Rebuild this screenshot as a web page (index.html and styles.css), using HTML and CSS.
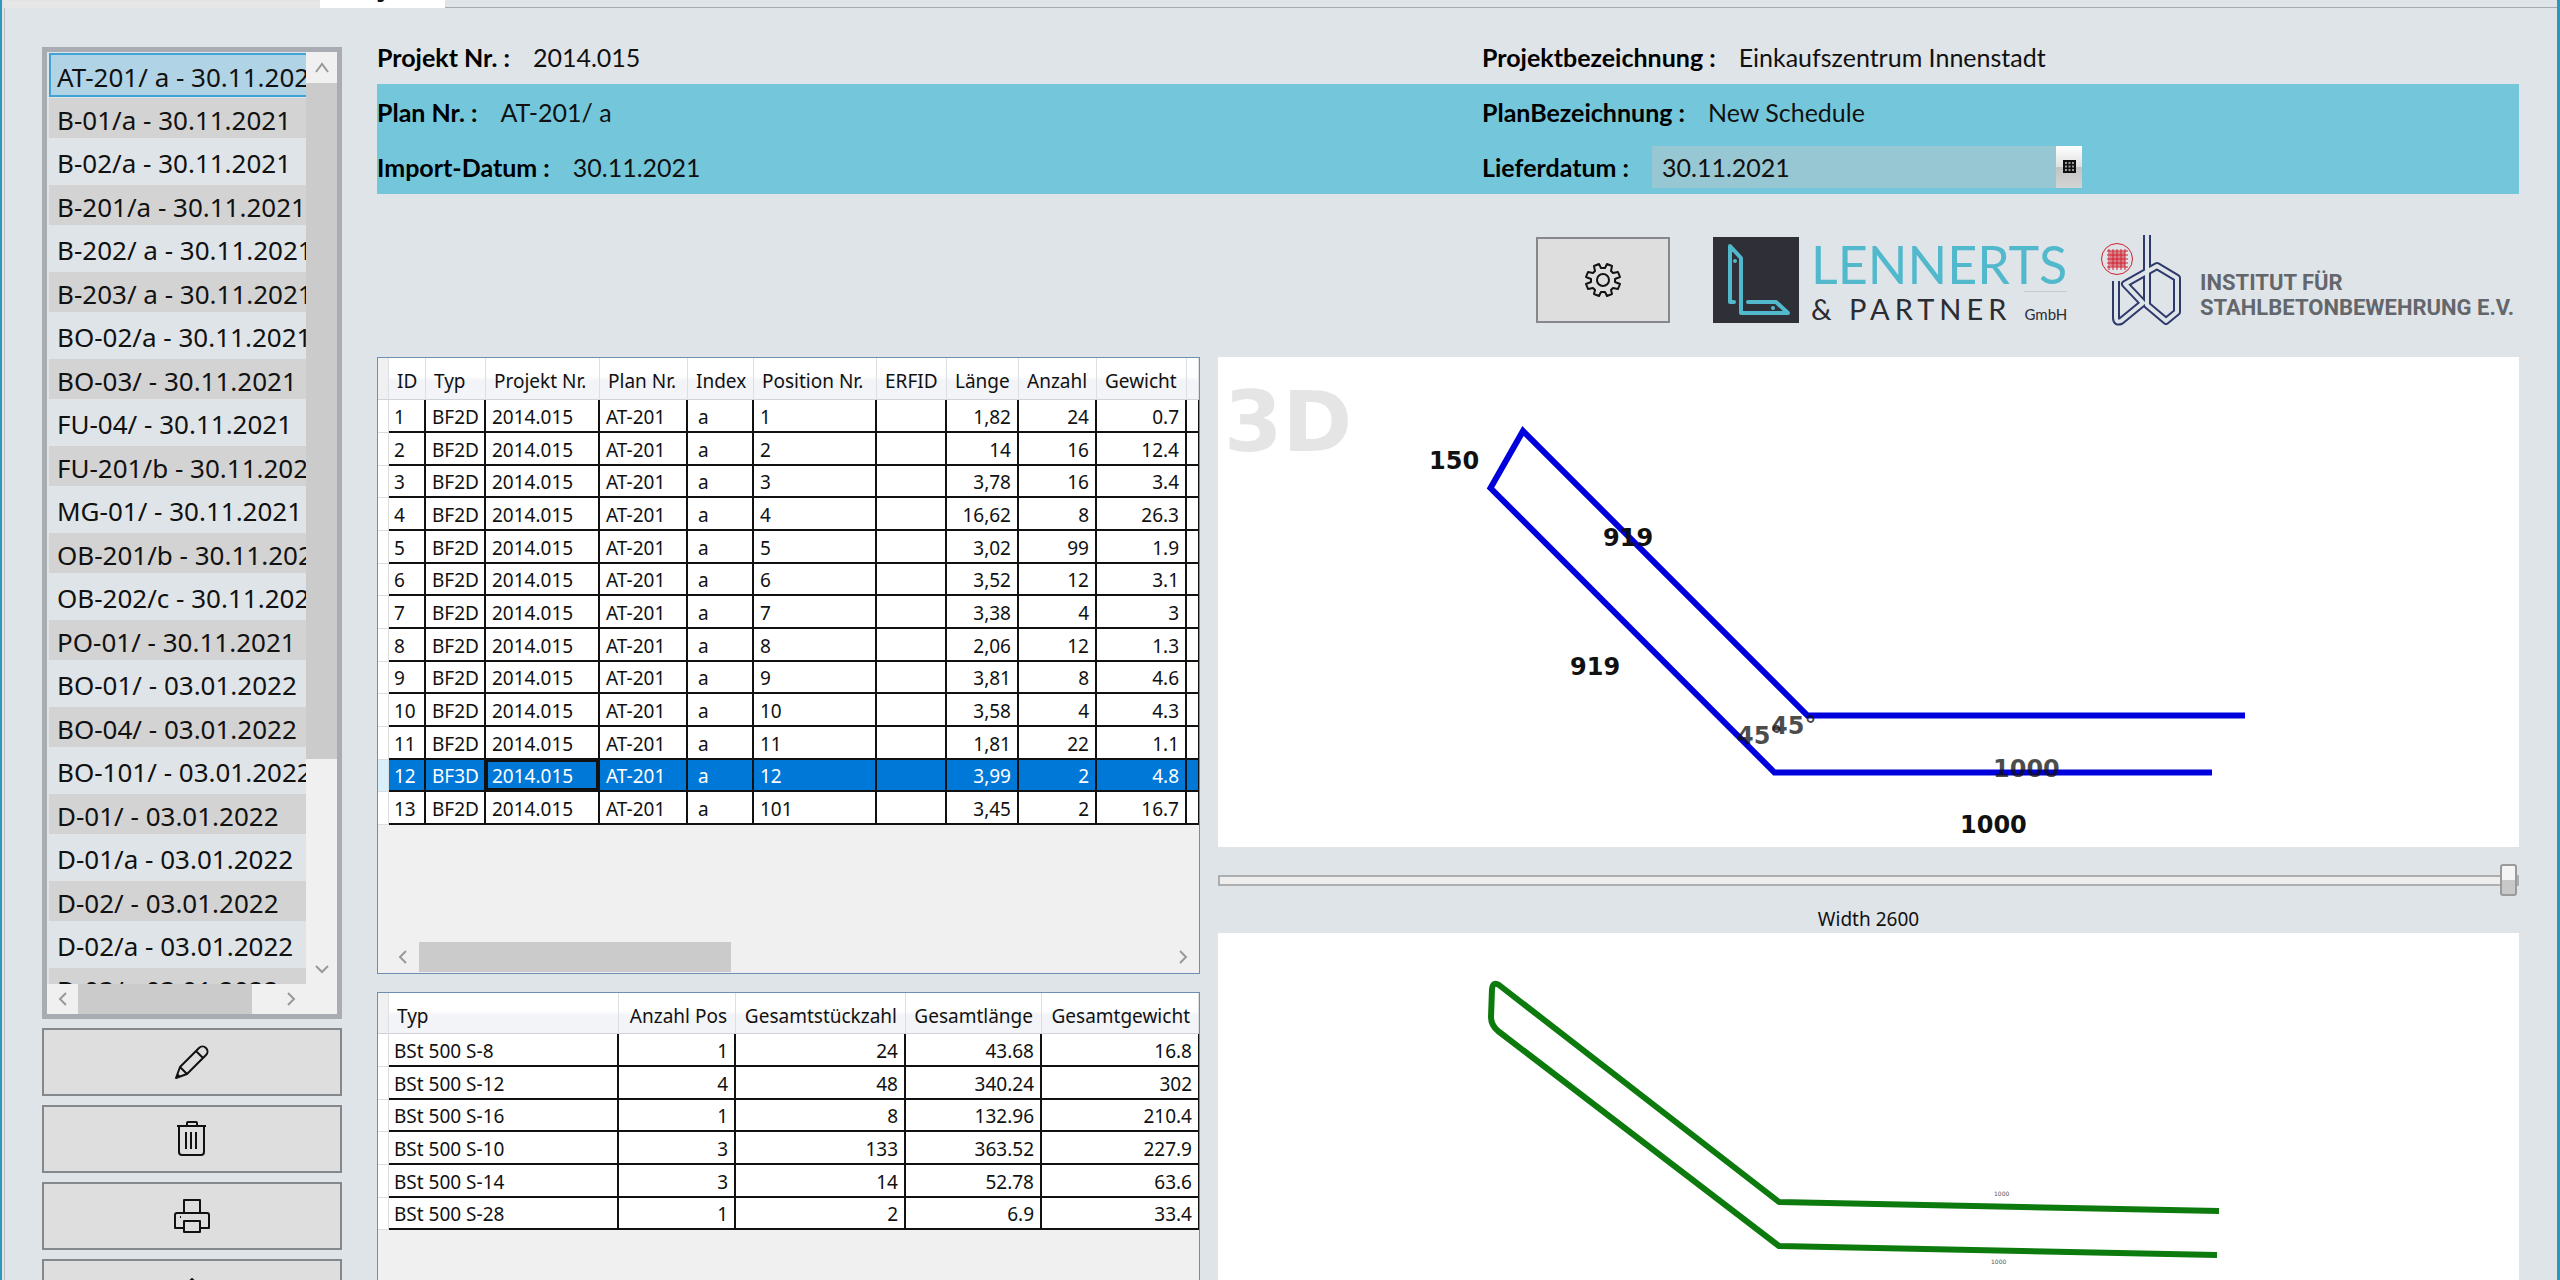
FILE: index.html
```html
<!DOCTYPE html>
<html lang="de">
<head>
<meta charset="utf-8">
<title>Projekt 2014.015</title>
<link rel="stylesheet" href="styles.css">
</head>
<body>
<div class="window">
  <nav class="tabs">
    <span class="tab-idle"></span>
    <button class="tab-active" type="button">Projekt</button>
  </nav>
  <div class="page">
    <aside class="sidebar">
      <div class="plan-list">
        <ul class="plans">
          <li class="selected">AT-201/ a - 30.11.2021</li>
          <li>B-01/a - 30.11.2021</li>
          <li>B-02/a - 30.11.2021</li>
          <li>B-201/a - 30.11.2021</li>
          <li>B-202/ a - 30.11.2021</li>
          <li>B-203/ a - 30.11.2021</li>
          <li>BO-02/a - 30.11.2021</li>
          <li>BO-03/ - 30.11.2021</li>
          <li>FU-04/ - 30.11.2021</li>
          <li>FU-201/b - 30.11.2021</li>
          <li>MG-01/ - 30.11.2021</li>
          <li>OB-201/b - 30.11.2021</li>
          <li>OB-202/c - 30.11.2021</li>
          <li>PO-01/ - 30.11.2021</li>
          <li>BO-01/ - 03.01.2022</li>
          <li>BO-04/ - 03.01.2022</li>
          <li>BO-101/ - 03.01.2022</li>
          <li>D-01/ - 03.01.2022</li>
          <li>D-01/a - 03.01.2022</li>
          <li>D-02/ - 03.01.2022</li>
          <li>D-02/a - 03.01.2022</li>
          <li>D-03/ - 03.01.2022</li>
        </ul>
        <div class="scroll-v">
          <svg class="chev" viewBox="0 0 16 16"><path d="M2 12 8 4l6 8"/></svg>
          <div class="thumb-v"></div>
          <svg class="chev" viewBox="0 0 16 16"><path d="M2 5l6 6 6-6"/></svg>
        </div>
        <div class="scroll-h">
          <svg class="chev" viewBox="0 0 16 16"><path d="M11 2 5 8l6 6"/></svg>
          <div class="thumb-h"></div>
          <svg class="chev" viewBox="0 0 16 16"><path d="M5 2l6 6-6 6"/></svg>
        </div>
      </div>
      <button class="tool" type="button" aria-label="Bearbeiten">
        <svg viewBox="0 0 36 36"><path d="M2 34 6 23 25 4c2-2 5-2 7 0s2 5 0 7L13 30zM6 23l7 7M22 7l7 7M3 30l3 3"/></svg>
      </button>
      <button class="tool" type="button" aria-label="Löschen">
        <svg viewBox="0 0 36 36"><path d="M3 5h29M13 5V2c0-1 0-1 1-1h8c1 0 1 0 1 1v3M5 5v26c0 2 1 3 3 3h19c2 0 3-1 3-3V5M12 11v17M17 11v17M22 11v17"/></svg>
      </button>
      <button class="tool" type="button" aria-label="Drucken">
        <svg viewBox="0 0 36 36"><path d="M10 15V2h16v13M9 30H1V17c0-1 1-2 2-2h30c1 0 2 1 2 2v13h-8M10 23h16v11H10zM6 19h1"/></svg>
      </button>
      <button class="tool" type="button" aria-label="Exportieren">
        <svg viewBox="0 0 36 36"><path d="M18 30V4M10 12l8-8 8 8M3 34h30"/></svg>
      </button>
    </aside>

    <main class="main">
      <dl class="info">
        <div class="info-row">
          <div class="field"><dt>Projekt Nr. :</dt><dd>2014.015</dd></div>
          <div class="field"><dt>Projektbezeichnung :</dt><dd>Einkaufszentrum Innenstadt</dd></div>
        </div>
        <div class="info-row band">
          <div class="field"><dt>Plan Nr. :</dt><dd>AT-201/ a</dd></div>
          <div class="field"><dt>PlanBezeichnung :</dt><dd>New Schedule</dd></div>
        </div>
        <div class="info-row band">
          <div class="field"><dt>Import-Datum :</dt><dd>30.11.2021</dd></div>
          <div class="field">
            <dt><label for="liefer">Lieferdatum :</label></dt>
            <dd class="date">
              <input id="liefer" type="text" value="30.11.2021">
              <button type="button" aria-label="Kalender"><svg viewBox="0 0 13 13"><path class="cal-bg" d="M0 0h13v13H0z"/><path class="cal-cells" d="M2 2h2v2H2zM5.500 2h2v2h-2zM9 2h2v2H9zM2 5.500h2v2H2zM5.500 5.500h2v2h-2zM9 5.500h2v2H9zM2 9h2v2H2zM5.500 9h2v2h-2zM9 9h2v2H9z"/></svg></button>
            </dd>
          </div>
        </div>
      </dl>

      <div class="brand-row">
        <button class="settings" type="button" aria-label="Einstellungen">
          <svg viewBox="-18 -18 36 36"><path d="M-4-16-2-12H2L4-16 9-14 8-9 10-7 15-8 17-3 12-1V2L17 4 15 9 10 8 8 10 9 14 4 16 2 12H-2L-4 16-9 14-8 10-10 8-15 9-17 4-12 2V-1L-17-3-15-8-10-7-8-9-9-14Z"/><circle r="6"/></svg>
        </button>
        <div class="lennerts">
          <svg viewBox="0 0 86 86"><path class="box" d="M0 0h86v86H0z"/><path class="ell" d="M21 65H17V9L28 21V76H75L63 65H35"/><circle cx="22" cy="24" r="2"/><circle cx="60" cy="71" r="2"/></svg>
          <div class="lennerts-text">
            <span class="l1">LENNERTS</span>
            <div class="l2"><span class="partner">&amp; PARTNER</span><span class="gmbh">GmbH</span></div>
          </div>
        </div>
        <div class="institut">
          <svg viewBox="0 0 82 92">
            <g class="red"><circle cx="16" cy="24" r="15.500"/><path d="M6 16h21M6 20h21M6 24h21M6 28h21M6 32h21M8 14v21M12 14v21M16 14v21M20 14v21M24 14v21"/><path class="dense" d="M9 24h15"/></g>
            <g class="rail"><path d="M46 0V70L65 86 76 77V43L56 31 24 49 42 68 20 86Q15 88 15 83V46"/></g>
            <g class="core"><path d="M46 0V70L65 86 76 77V43L56 31 24 49 42 68 20 86Q15 88 15 83V46"/></g>
          </svg>
          <div class="institut-text">INSTITUT FÜR<br>STAHLBETONBEWEHRUNG E.V.</div>
        </div>
      </div>

      <div class="work">
        <div class="left">
          <section class="panel positions">
            <table class="grid">
              <colgroup><col style="width:11px"><col style="width:37px"><col style="width:60px"><col style="width:114px"><col style="width:88px"><col style="width:66px"><col style="width:123px"><col style="width:70px"><col style="width:72px"><col style="width:78px"><col style="width:90px"><col style="width:12px"></colgroup>
              <thead><tr><th></th><th>ID</th><th>Typ</th><th>Projekt Nr.</th><th>Plan Nr.</th><th>Index</th><th>Position Nr.</th><th>ERFID</th><th>Länge</th><th>Anzahl</th><th>Gewicht</th><th></th></tr></thead>
              <tbody>
                <tr><td></td><td>1</td><td>BF2D</td><td>2014.015</td><td>AT-201</td><td>a</td><td>1</td><td></td><td>1,82</td><td>24</td><td>0.7</td><td></td></tr>
                <tr><td></td><td>2</td><td>BF2D</td><td>2014.015</td><td>AT-201</td><td>a</td><td>2</td><td></td><td>14</td><td>16</td><td>12.4</td><td></td></tr>
                <tr><td></td><td>3</td><td>BF2D</td><td>2014.015</td><td>AT-201</td><td>a</td><td>3</td><td></td><td>3,78</td><td>16</td><td>3.4</td><td></td></tr>
                <tr><td></td><td>4</td><td>BF2D</td><td>2014.015</td><td>AT-201</td><td>a</td><td>4</td><td></td><td>16,62</td><td>8</td><td>26.3</td><td></td></tr>
                <tr><td></td><td>5</td><td>BF2D</td><td>2014.015</td><td>AT-201</td><td>a</td><td>5</td><td></td><td>3,02</td><td>99</td><td>1.9</td><td></td></tr>
                <tr><td></td><td>6</td><td>BF2D</td><td>2014.015</td><td>AT-201</td><td>a</td><td>6</td><td></td><td>3,52</td><td>12</td><td>3.1</td><td></td></tr>
                <tr><td></td><td>7</td><td>BF2D</td><td>2014.015</td><td>AT-201</td><td>a</td><td>7</td><td></td><td>3,38</td><td>4</td><td>3</td><td></td></tr>
                <tr><td></td><td>8</td><td>BF2D</td><td>2014.015</td><td>AT-201</td><td>a</td><td>8</td><td></td><td>2,06</td><td>12</td><td>1.3</td><td></td></tr>
                <tr><td></td><td>9</td><td>BF2D</td><td>2014.015</td><td>AT-201</td><td>a</td><td>9</td><td></td><td>3,81</td><td>8</td><td>4.6</td><td></td></tr>
                <tr><td></td><td>10</td><td>BF2D</td><td>2014.015</td><td>AT-201</td><td>a</td><td>10</td><td></td><td>3,58</td><td>4</td><td>4.3</td><td></td></tr>
                <tr><td></td><td>11</td><td>BF2D</td><td>2014.015</td><td>AT-201</td><td>a</td><td>11</td><td></td><td>1,81</td><td>22</td><td>1.1</td><td></td></tr>
                <tr class="current"><td></td><td>12</td><td>BF3D</td><td class="focus">2014.015</td><td>AT-201</td><td>a</td><td>12</td><td></td><td>3,99</td><td>2</td><td>4.8</td><td></td></tr>
                <tr><td></td><td>13</td><td>BF2D</td><td>2014.015</td><td>AT-201</td><td>a</td><td>101</td><td></td><td>3,45</td><td>2</td><td>16.7</td><td></td></tr>
              </tbody>
            </table>
            <div class="grid-scroll">
              <svg class="chev" viewBox="0 0 16 16"><path d="M11 2 5 8l6 6"/></svg>
              <div class="thumb-grid"></div>
              <svg class="chev" viewBox="0 0 16 16"><path d="M5 2l6 6-6 6"/></svg>
            </div>
          </section>
          <section class="panel totals">
            <table class="grid">
              <colgroup><col style="width:11px"><col style="width:230px"><col style="width:117px"><col style="width:170px"><col style="width:136px"><col style="width:157px"></colgroup>
              <thead><tr><th></th><th>Typ</th><th>Anzahl Pos</th><th>Gesamtstückzahl</th><th>Gesamtlänge</th><th>Gesamtgewicht</th></tr></thead>
              <tbody>
                <tr><td></td><td>BSt 500 S-8</td><td>1</td><td>24</td><td>43.68</td><td>16.8</td></tr>
                <tr><td></td><td>BSt 500 S-12</td><td>4</td><td>48</td><td>340.24</td><td>302</td></tr>
                <tr><td></td><td>BSt 500 S-16</td><td>1</td><td>8</td><td>132.96</td><td>210.4</td></tr>
                <tr><td></td><td>BSt 500 S-10</td><td>3</td><td>133</td><td>363.52</td><td>227.9</td></tr>
                <tr><td></td><td>BSt 500 S-14</td><td>3</td><td>14</td><td>52.78</td><td>63.6</td></tr>
                <tr><td></td><td>BSt 500 S-28</td><td>1</td><td>2</td><td>6.9</td><td>33.4</td></tr>
              </tbody>
            </table>
          </section>
        </div>

        <div class="right">
          <svg class="view" viewBox="0 0 1301 490">
            <text class="mark" x="6" y="94">3D</text>
            <path class="blue" d="M1027 358.500H589.500L305 74 272.500 131 556.500 415.500H994"/>
            <text class="dim" x="211" y="112">150</text>
            <text class="dim" x="385" y="189">919</text>
            <text class="dim" x="352" y="318">919</text>
            <text class="dim soft" x="519" y="387">45°</text>
            <text class="dim soft" x="553" y="377">45°</text>
            <text class="dim soft" x="775" y="420">1000</text>
            <text class="dim" x="742" y="476">1000</text>
          </svg>
          <input class="slider" type="range" min="0" max="2600" value="2600" aria-labelledby="width-label">
          <div class="width-label" id="width-label">Width 2600</div>
          <svg class="view" viewBox="0 0 1301 420">
            <path class="green" d="M1001 278 561 269 281 52Q275 48 274 56L273 84Q273 92 280 98L561 313 999 322"/>
            <text class="tiny" x="776" y="263">1000</text>
            <text class="tiny" x="773" y="331">1000</text>
          </svg>
        </div>
      </div>
    </main>
  </div>
</div>
</body>
</html>
```
FILE: styles.css
```css
* { box-sizing: border-box; }

body {
  margin: 0;
  height: 100vh;
  overflow: hidden;
  background: #dfe4e8;
  color: #111;
  font-family: "Noto Sans", "Open Sans", sans-serif;
  font-size: 19px;
}

button { padding: 0; font: inherit; color: inherit; }

.window {
  height: 100vh;
  overflow: hidden;
  border-left: 2px solid #2b9ab8;
  border-right: 3px solid #2b9ab8;
}

/* tab strip */
.tabs {
  display: flex;
  align-items: flex-end;
  height: 8px;
  margin-left: 2px;
  overflow: hidden;
  box-shadow: inset 0 -1px #a5abb0;
}
.tab-idle { width: 316px; height: 7px; background: #e6e6e6; }
.tab-active {
  width: 125px;
  height: 44px;
  border: 0;
  background: #fff;
  font-size: 25px;
  font-weight: 700;
}

.page {
  display: grid;
  grid-template-columns: 300px minmax(0, 1fr);
  gap: 35px;
  margin-left: 2px;
  padding: 0 38px 0 37px;
  border-left: 1px solid #b8bec3;
}

/* sidebar */
.sidebar { display: flex; flex-direction: column; gap: 9px; padding-top: 39px; }
.plan-list {
  display: grid;
  grid-template-columns: minmax(0, 1fr) 31px;
  grid-template-rows: minmax(0, 1fr) 30px;
  height: 972px;
  border: 5px solid #a9adb3;
}
.plans {
  margin: 0;
  padding: 1px 0 0 2px;
  overflow: hidden;
  list-style: none;
  font-size: 26px;
  line-height: 44px;
  white-space: nowrap;
}
.plans li {
  height: 44px;
  padding-left: 8px;
  border-top: 1px solid transparent;
  border-bottom: 2px solid transparent;
  background-clip: padding-box;
}
.plans li:nth-child(even) { height: 43px; background-color: #d3d3d3; }
.plans .selected {
  padding-left: 6px;
  border: 2px solid #3fa3d4;
  border-right: 0;
  background: #b0d3e5;
}
.chev { width: 16px; height: 16px; fill: none; stroke: #999; stroke-width: 2; }
.scroll-v {
  display: flex;
  flex-direction: column;
  align-items: center;
  background: #f0f0f0;
  padding: 8px 0 7px;
}
.thumb-v { width: 31px; height: 676px; margin: 7px 0 auto; background: #cbcbcb; }
.scroll-h {
  display: flex;
  align-items: center;
  grid-column: 1 / 3;
  padding: 0 38px 0 8px;
  background: #f0f0f0;
}
.thumb-h { width: 174px; height: 30px; margin: 0 auto 0 7px; background: #cbcbcb; }
.tool, .settings {
  display: grid;
  place-items: center;
  border: 2px solid #84888c;
  background: #dedede;
}
.tool { height: 68px; }
.tool svg, .settings svg {
  width: 36px;
  height: 36px;
  fill: none;
  stroke: #111;
  stroke-width: 2;
  stroke-linejoin: round;
}

/* project data */
.info { margin: 0; padding-top: 21px; font-family: Lato, sans-serif; font-size: 25px; }
.info-row { display: grid; grid-template-columns: 1105fr 1037fr; height: 55px; }
.band { background: #74c7db; }
.field { display: flex; align-items: center; gap: 23px; }
.field dt { font-weight: 700; color: #000; }
.field dd { margin: 0; }
.date { display: flex; height: 42px; }
.date input {
  width: 404px;
  padding: 0 10px;
  border: 0;
  background: #97c7d3;
  color: inherit;
  font: inherit;
}
.date button {
  display: grid;
  place-items: center;
  width: 26px;
  border: 0;
  background: linear-gradient(#fff 0, #e0e0e0 50%, #c4c4c4 51%, #d4d4d4 100%);
}
.date svg { width: 13px; height: 13px; }
.cal-bg { fill: #111; }
.cal-cells { fill: #999; }

/* logos */
.brand-row {
  display: flex;
  justify-content: flex-end;
  height: 86px;
  margin: 43px 0 34px;
}
.settings { width: 134px; margin-right: 43px; }
.lennerts { display: flex; gap: 12px; width: 353px; margin-right: 35px; }
.lennerts svg { flex: none; width: 86px; height: 86px; }
.lennerts .box { fill: #2f3037; }
.lennerts .ell { fill: none; stroke: #52b9cd; stroke-width: 4; stroke-linejoin: round; stroke-linecap: round; }
.lennerts circle { fill: #52b9cd; }
.lennerts-text { font-family: Lato, sans-serif; color: #2b2d33; white-space: nowrap; }
.l1 { display: block; color: #52b9cd; font-size: 52px; line-height: 54px; }
.l2 { display: flex; justify-content: space-between; align-items: baseline; line-height: 32px; }
.partner { font-size: 29px; letter-spacing: 5px; }
.gmbh { border-top: 1px solid #c3ccd3; font-size: 15px; line-height: 44px; }
.institut { display: flex; gap: 17px; width: 418px; }
.institut svg { flex: none; width: 82px; height: 92px; margin-top: -2px; fill: none; }
.red { stroke: #d2202f; stroke-width: 1; }
.red .dense { stroke: rgba(210, 32, 47, .5); stroke-width: 15; }
.rail { stroke: #2d3a6b; stroke-width: 8; stroke-linejoin: round; }
.core { stroke: #dfe4e8; stroke-width: 4; stroke-linejoin: round; }
.institut-text {
  padding-top: 33px;
  color: #63676b;
  font-family: Roboto, sans-serif;
  font-size: 22px;
  font-weight: 700;
  line-height: 25px;
  white-space: nowrap;
}

/* tables */
.work { display: grid; grid-template-columns: minmax(0, 823fr) minmax(0, 1301fr); gap: 18px; }
.left { display: flex; flex-direction: column; gap: 18px; }
.panel {
  display: flex;
  flex-direction: column;
  overflow: hidden;
  border: 1px solid #6c8fb3;
  background: #f0f0f0;
}
.positions { height: 617px; }
.totals { min-height: 320px; }
.grid { table-layout: fixed; width: 821px; border-spacing: 0; white-space: nowrap; }
.grid th {
  height: 42px;
  padding: 5px 8px 0;
  border-right: 1px solid #dcdfe3;
  border-bottom: 1px solid #cfd3d8;
  background: linear-gradient(#fff 45%, #f3f4f7 55%);
  font-weight: 400;
  text-align: left;
}
.totals th { height: 41px; }
.grid td {
  height: 33px;
  padding: 2px 6px 0;
  border-right: 2px solid #111;
  border-bottom: 2px solid #111;
  background: #fff;
  line-height: 28px;
}
.grid tr:nth-child(3n) td { height: 32px; }
.grid th:first-child { background: #f0f0f0; }
.grid td:first-child { border-right: 1px solid #ddd; border-bottom: 1px solid #ddd; }
.grid td:nth-child(2) { padding-left: 5px; }
.grid td:last-child { border-right-width: 1px; }
.positions td:nth-child(6) { padding-left: 10px; }
.positions td:nth-child(n+9), .totals td:nth-child(n+3), .totals th:nth-child(n+3) { text-align: right; }
.grid .current td { background: #0078d7; color: #fff; }
.grid .current td:first-child { background: #d9f0fb; }
.grid .focus { box-shadow: inset 0 0 0 2px #111; }
.grid-scroll {
  display: flex;
  align-items: center;
  margin: auto 8px 1px 17px;
}
.thumb-grid { width: 312px; height: 30px; margin: 0 auto 0 8px; background: #cbcbcb; }

/* drawings */
.right { display: flex; flex-direction: column; }
.view { display: block; width: 100%; background: #fff; font-family: "DejaVu Sans", sans-serif; }
.blue { fill: none; stroke: #00d; stroke-width: 6; }
.green { fill: none; stroke: #0c7a0c; stroke-width: 6; stroke-linejoin: round; }
.mark { fill: #e5e5e5; font-size: 84px; font-weight: 700; }
.dim { fill: #111; font-size: 24px; font-weight: 700; }
.soft { fill-opacity: .75; }
.tiny { fill: #555; font-size: 6px; }
.slider {
  appearance: none;
  width: 100%;
  height: 32px;
  margin: 17px 0 9px;
  background: none;
}
.slider::-webkit-slider-runnable-track { height: 11px; border: 2px solid #abafb2; background: #efeeec; }
.slider::-webkit-slider-thumb {
  appearance: none;
  width: 17px;
  height: 32px;
  margin-top: -13px;
  border: 2px solid #9a9a9a;
  border-radius: 3px;
  background: linear-gradient(#f4f4f4 50%, #c8c8c8 51%);
}
.width-label { height: 28px; line-height: 28px; text-align: center; }
```
